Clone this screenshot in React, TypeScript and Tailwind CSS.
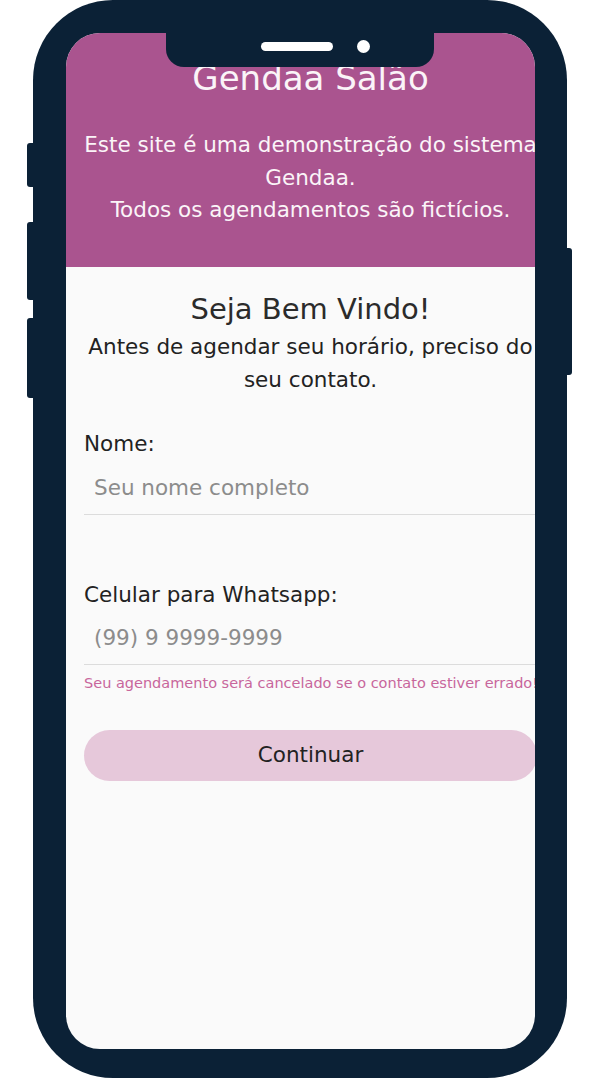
import { useState } from "react";

const font = { fontFamily: '"DejaVu Sans", Verdana, sans-serif' };

export default function App() {
  const [nome, setNome] = useState("");
  const [celular, setCelular] = useState("");

  return (
    <div className="w-[600px] h-[1080px] bg-white" style={font}>
      {/* Phone frame */}
      <div className="relative ml-[33px] w-[534px] h-[1078px] rounded-[80px] bg-[#0b2136] pt-[33px] pl-[33px] pr-[32px] pb-[29px]">
        {/* side buttons */}
        <div className="absolute left-[-6px] top-[143px] w-[8px] h-[44px] rounded-l-[3px] bg-[#0b2136]" />
        <div className="absolute left-[-6px] top-[222px] w-[8px] h-[78px] rounded-l-[3px] bg-[#0b2136]" />
        <div className="absolute left-[-6px] top-[318px] w-[8px] h-[80px] rounded-l-[3px] bg-[#0b2136]" />
        <div className="absolute right-[-5px] top-[248px] w-[8px] h-[127px] rounded-r-[3px] bg-[#0b2136]" />

        {/* Screen */}
        <div className="w-full h-full rounded-[34px] overflow-hidden bg-[#fafafa]">
          <div className="w-[489px]">
            {/* Header */}
            <div className="h-[234px] bg-[#aa548f] text-[#fbf4f8] text-center pt-[25px]">
              <h1 className="text-[34px] leading-[40px] font-normal">Gendaa Salão</h1>
              <div className="mt-[31px] text-[21.5px] leading-[32.5px]">
                <div className="whitespace-nowrap">Este site é uma demonstração do sistema</div>
                <div>Gendaa.</div>
                <div>Todos os agendamentos são fictícios.</div>
              </div>
            </div>

            {/* Form */}
            <div className="px-[18px] pt-[25px] text-[#222]">
              <h2 className="text-center text-[29px] leading-[34px] text-[#2b2b2b]">Seja Bem Vindo!</h2>
              <p className="mt-[4px] text-center text-[21.5px] leading-[33px]">
                <span className="block whitespace-nowrap">Antes de agendar seu horário, preciso do</span>
                <span className="block">seu contato.</span>
              </p>

              <label className="block mt-[32px] text-[21.5px] leading-[32.5px]">Nome:</label>
              <input
                value={nome}
                onChange={(e) => setNome(e.target.value)}
                placeholder="Seu nome completo"
                className="block w-full h-[54px] pl-[10px] bg-transparent border-b border-[#dcdcdc] text-[21.5px] outline-none placeholder:text-[#8c8c8c]"
                style={font}
              />

              <label className="block mt-[64px] text-[21.5px] leading-[32.5px]">Celular para Whatsapp:</label>
              <input
                value={celular}
                onChange={(e) => setCelular(e.target.value)}
                placeholder="(99) 9 9999-9999"
                className="block w-full h-[54px] pl-[10px] bg-transparent border-b border-[#dcdcdc] text-[21.5px] outline-none placeholder:text-[#8c8c8c]"
                style={font}
              />
              <div className="mt-[8px] text-[14.5px] leading-[20px] text-[#c8669c] whitespace-nowrap">
                Seu agendamento será cancelado se o contato estiver errado!
              </div>

              <button
                className="mt-[37px] w-full h-[51px] rounded-full bg-[#e6c8da] text-[21.5px] text-[#222]"
                style={font}
              >
                Continuar
              </button>
            </div>
          </div>
        </div>

        {/* Notch */}
        <div className="absolute left-[133px] top-0 w-[268px] h-[67px] rounded-b-[18px] bg-[#0b2136] flex items-center pl-[95px] pt-[25px] gap-[24px]">
          <div className="w-[72px] h-[9px] rounded-full bg-white" />
          <div className="w-[13px] h-[13px] rounded-full bg-white" />
        </div>
      </div>
    </div>
  );
}
